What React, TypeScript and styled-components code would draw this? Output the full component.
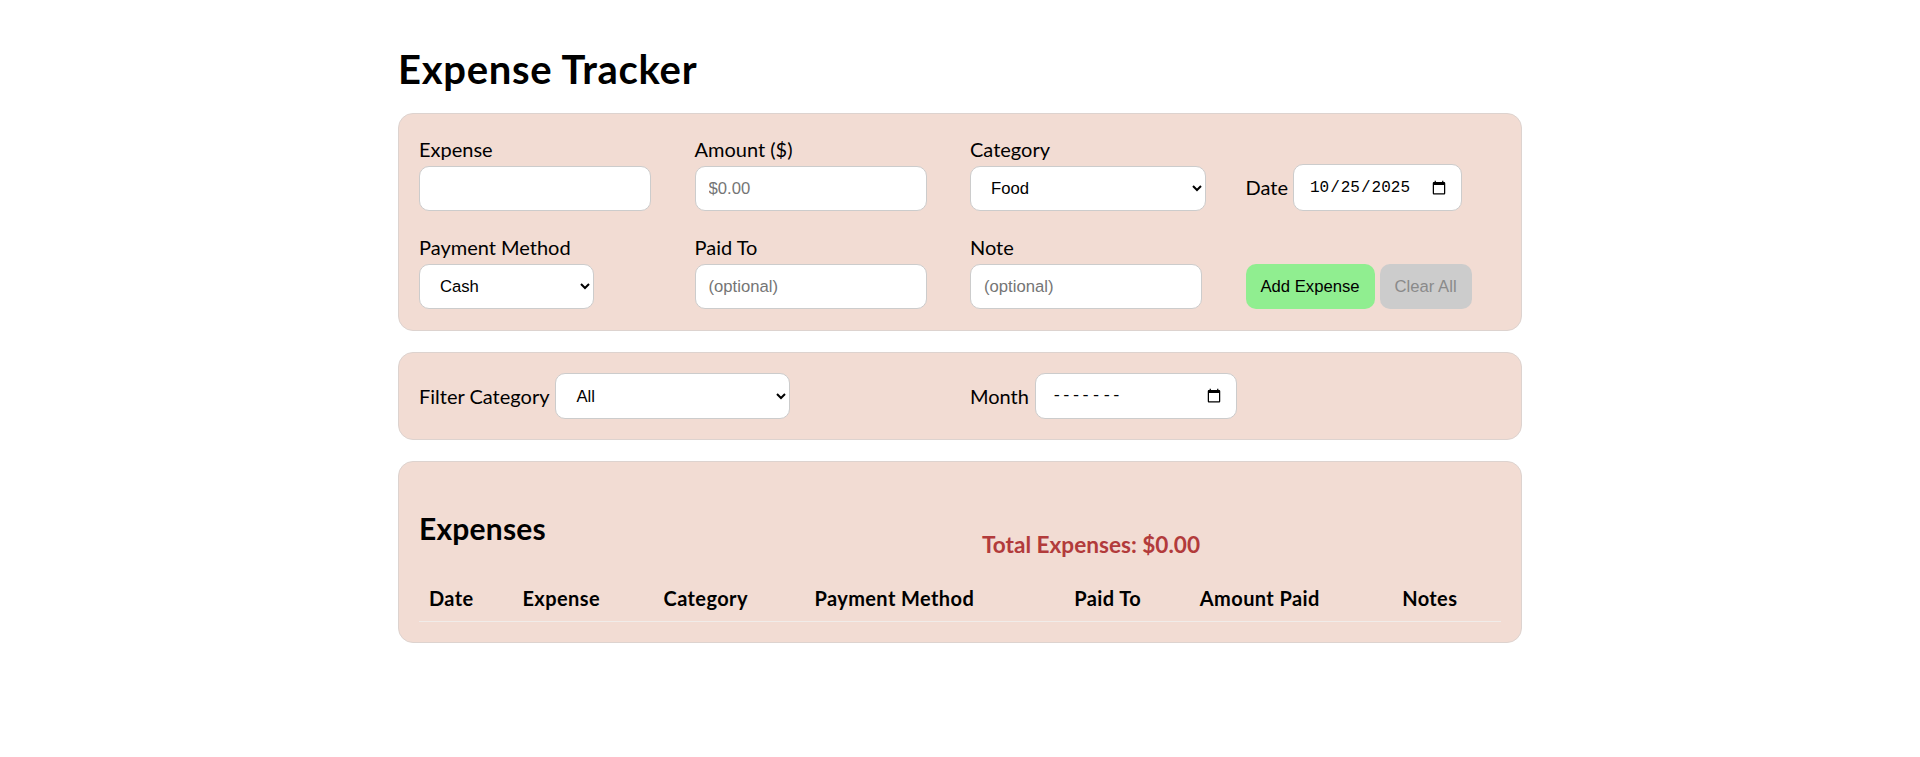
import React from "react";
import styled, { createGlobalStyle } from "styled-components";

const Global = createGlobalStyle`
  html, body { margin: 0; padding: 0; background: #ffffff; }
  body { font-family: Lato, "Open Sans", "Noto Sans", sans-serif; color: #000; }
  * { box-sizing: border-box; }
`;

const Page = styled.div`
  width: 1124px;
  margin: 0 auto;
  padding-top: 43px;
`;

const Title = styled.h1`
  font-size: 40px;
  font-weight: 700;
  line-height: 53px;
  letter-spacing: 0.7px;
  margin: 0 0 17px;
`;

const Stack = styled.div`
  display: flex;
  flex-direction: column;
  gap: 21px;
`;

const Panel = styled.section`
  background: #f2dcd3;
  border: 1px solid #ddd3cf;
  border-radius: 15px;
  padding: 20px;
`;

const FormPanel = styled(Panel)`
  padding-bottom: 21px;
`;

const FormGrid = styled.div`
  display: grid;
  grid-template-columns: repeat(4, 1fr);
  column-gap: 20px;
  row-gap: 21px;
`;

const Field = styled.div`
  display: flex;
  flex-direction: column;
  align-items: flex-start;
`;

const Label = styled.label`
  font-size: 20px;
  line-height: 27px;
  padding-top: 2px;
  margin-bottom: 3px;
`;

const InlineField = styled.div`
  display: flex;
  align-items: center;
  gap: 5px;
  align-self: end;
`;

const InlineLabel = styled.label`
  font-size: 20px;
  line-height: 27px;
`;

const controlBase = `
  height: 45px;
  border: 1px solid #cccccc;
  border-radius: 10px;
  background: #ffffff;
  font-family: "Liberation Sans", Arial, sans-serif;
  font-size: 16.67px;
  color: #000;
  outline: none;
`;

const TextInput = styled.input<{ $w: number }>`
  ${controlBase}
  width: ${(p) => p.$w}px;
  padding: 0 13px;
  &::placeholder { color: #757575; }
`;

const Select = styled.select<{ $w: number; $h?: number }>`
  ${controlBase}
  height: ${(p) => p.$h ?? 45}px;
  width: ${(p) => p.$w}px;
  padding: 0 12px 0 16px;
`;

const DateInput = styled.input<{ $w: number; $h: number }>`
  ${controlBase}
  height: ${(p) => p.$h}px;
  width: ${(p) => p.$w}px;
  padding: 0 12px 0 15px;
  font-family: "Liberation Mono", "DejaVu Sans Mono", monospace;
  font-size: 16px;
`;

const Actions = styled.div`
  display: flex;
  align-self: end;
  gap: 5px;
`;

const Button = styled.button<{ $variant: "add" | "clear" }>`
  height: 45px;
  padding: 0 15px;
  border: none;
  border-radius: 10px;
  font-family: "Liberation Sans", Arial, sans-serif;
  font-size: 16.67px;
  background: ${(p) => (p.$variant === "add" ? "#90ee90" : "#cccccc")};
  color: ${(p) => (p.$variant === "add" ? "#000000" : "#8a8a8a")};
`;

const FilterGrid = styled.div`
  display: grid;
  grid-template-columns: 1fr 1fr;
  column-gap: 20px;
`;

const FilterItem = styled.div`
  display: flex;
  align-items: center;
  gap: 6px;
`;

const ListHeader = styled.div`
  display: grid;
  grid-template-columns: 1fr 1fr;
  column-gap: 20px;
  align-items: start;
`;

const ListTitle = styled.h2`
  font-size: 30px;
  font-weight: 700;
  line-height: 40px;
  letter-spacing: 0.2px;
  margin: 26px 0 24px;
`;

const Total = styled.h3`
  font-size: 22.6px;
  font-weight: 700;
  line-height: 31px;
  color: #b23b3b;
  margin: 47px 0 0 12px;
`;

const Table = styled.table`
  width: 100%;
  border-collapse: collapse;
`;

const Th = styled.th`
  text-align: left;
  font-size: 20px;
  font-weight: 700;
  line-height: 27px;
  letter-spacing: 0.4px;
  padding: 13px 10px 9px;
  border-bottom: 1px solid #f1ece9;
`;

const categories = ["Food", "Transportation", "Entertainment", "Utilities", "Shopping", "Health", "Other"];
const payments = ["Cash", "Credit Card", "Debit Card", "Bank Transfer"];
const columns = ["Date", "Expense", "Category", "Payment Method", "Paid To", "Amount Paid", "Notes"];

export default function App() {
  return (
    <>
      <Global />
      <Page>
        <Title>Expense Tracker</Title>
        <Stack>
          <FormPanel>
            <FormGrid>
              <Field>
                <Label>Expense</Label>
                <TextInput $w={232} type="text" />
              </Field>
              <Field>
                <Label>Amount ($)</Label>
                <TextInput $w={232} type="text" placeholder="$0.00" />
              </Field>
              <Field>
                <Label>Category</Label>
                <Select $w={236} defaultValue="Food">
                  {categories.map((c) => (
                    <option key={c}>{c}</option>
                  ))}
                </Select>
              </Field>
              <InlineField>
                <InlineLabel>Date</InlineLabel>
                <DateInput $w={169} $h={47} type="date" defaultValue="2025-10-25" />
              </InlineField>
              <Field>
                <Label>Payment Method</Label>
                <Select $w={175} defaultValue="Cash">
                  {payments.map((c) => (
                    <option key={c}>{c}</option>
                  ))}
                </Select>
              </Field>
              <Field>
                <Label>Paid To</Label>
                <TextInput $w={232} type="text" placeholder="(optional)" />
              </Field>
              <Field>
                <Label>Note</Label>
                <TextInput $w={232} type="text" placeholder="(optional)" />
              </Field>
              <Actions>
                <Button $variant="add">Add Expense</Button>
                <Button $variant="clear" disabled>
                  Clear All
                </Button>
              </Actions>
            </FormGrid>
          </FormPanel>

          <Panel>
            <FilterGrid>
              <FilterItem>
                <InlineLabel>Filter Category</InlineLabel>
                <Select $w={235} $h={46} defaultValue="All">
                  {["All", ...categories].map((c) => (
                    <option key={c}>{c}</option>
                  ))}
                </Select>
              </FilterItem>
              <FilterItem>
                <InlineLabel>Month</InlineLabel>
                <DateInput $w={202} $h={46} type="month" />
              </FilterItem>
            </FilterGrid>
          </Panel>

          <Panel>
            <ListHeader>
              <ListTitle>Expenses</ListTitle>
              <Total>Total Expenses: $0.00</Total>
            </ListHeader>
            <Table>
              <thead>
                <tr>
                  {columns.map((c) => (
                    <Th key={c}>{c}</Th>
                  ))}
                </tr>
              </thead>
              <tbody />
            </Table>
          </Panel>
        </Stack>
      </Page>
    </>
  );
}
